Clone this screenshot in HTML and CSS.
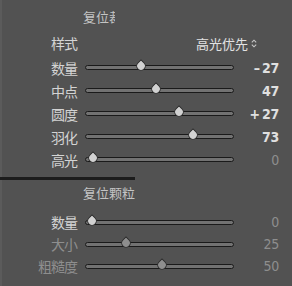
FILE: index.html
```html
<!DOCTYPE html>
<html lang="zh">
<head>
<meta charset="utf-8">
<link rel="stylesheet" href="styles.css">
</head>
<body>
<div class="panel">
  <div class="head"><span class="clip">复位裁剪后暗角</span></div>
  <div class="style-row">
    <span class="label">样式</span>
    <span class="select">高光优先<svg class="updown" width="6" height="9" viewBox="0 0 6 9"><path d="M0.8 3.4 L3 1.2 L5.2 3.4 M0.8 5.6 L3 7.8 L5.2 5.6" fill="none" stroke="#c8c8c8" stroke-width="1.1"/></svg></span>
  </div>
  <div class="rows">
    <div class="row"><span class="label">数量</span><div class="track"><span class="thumb" style="left:55px"></span></div><span class="value">–&#8201;27</span></div>
    <div class="row"><span class="label">中点</span><div class="track"><span class="thumb" style="left:70px"></span></div><span class="value">47</span></div>
    <div class="row"><span class="label">圆度</span><div class="track"><span class="thumb" style="left:93px"></span></div><span class="value">+&#8201;27</span></div>
    <div class="row"><span class="label">羽化</span><div class="track"><span class="thumb" style="left:107px"></span></div><span class="value">73</span></div>
    <div class="row"><span class="label">高光</span><div class="track"><span class="thumb" style="left:7px"></span></div><span class="value dim">0</span></div>
  </div>
  <div class="divider"></div>
  <div class="head head2">复位颗粒</div>
  <div class="rows rows2">
    <div class="row"><span class="label">数量</span><div class="track"><span class="thumb" style="left:6px"></span></div><span class="value dim">0</span></div>
    <div class="row"><span class="label dim">大小</span><div class="track"><span class="thumb dimthumb" style="left:40px"></span></div><span class="value dim">25</span></div>
    <div class="row"><span class="label dim">粗糙度</span><div class="track"><span class="thumb dimthumb" style="left:76px"></span></div><span class="value dim">50</span></div>
  </div>
</div>
</body>
</html>
```

FILE: styles.css
```css
html, body {
  margin: 0;
  padding: 0;
  background: #525252;
}
body {
  width: 292px;
  height: 286px;
  overflow: hidden;
  font-family: "Noto Sans CJK SC", "Liberation Sans", sans-serif;
  color: #d4d4d4;
}
.panel {
  width: 292px;
  height: 286px;
  box-sizing: border-box;
  padding-top: 7px;
  border-left: 2px solid #5b5b5b;
  display: flex;
  flex-direction: column;
}
.head {
  height: 20px;
  line-height: 20px;
  font-size: 13px;
  color: #c4c4c4;
  padding-left: 81px;
}
.clip {
  display: inline-block;
  width: 32px;
  overflow: hidden;
  white-space: nowrap;
  vertical-align: top;
}
.style-row {
  margin-top: 6px;
  height: 20px;
  display: flex;
  align-items: center;
  font-size: 13px;
}
.label {
  width: 75px;
  flex: none;
  text-align: right;
  font-size: 14px;
  letter-spacing: -1px;
  line-height: 20px;
  white-space: nowrap;
}
.select {
  margin-left: 119px;
  display: flex;
  align-items: center;
  gap: 3px;
  color: #e2e2e2;
}
.updown { display: block; }
.rows {
  margin-top: 3px;
  display: flex;
  flex-direction: column;
}
.row {
  height: 23px;
  display: flex;
  align-items: center;
}
.rows2 { margin-top: 8px; }
.rows2 .row { height: 22px; }
.track {
  position: relative;
  margin-left: 8px;
  width: 149px;
  height: 5px;
  box-sizing: border-box;
  background: #727272;
  border: 1px solid #1a1a1a;
  border-radius: 3px;
  flex: none;
}
.thumb {
  position: absolute;
  top: -5px;
  width: 10px;
  height: 10px;
  margin-left: -5px;
  background: #d2d2d2;
  border: 1px solid #2a2a2a;
  box-sizing: border-box;
  border-radius: 50% 0 50% 50%;
  transform: rotate(-45deg) scale(0.95);
}
.dimthumb { background: #8e8e8e; }
.value {
  width: 45px;
  flex: none;
  text-align: right;
  font-family: "DejaVu Sans", sans-serif;
  font-stretch: condensed;
  font-weight: bold;
  font-size: 14px;
  color: #e0e0e0;
  letter-spacing: -0.3px;
}
.dim { color: #8e8e8e; }
.value.dim { font-weight: normal; }
.divider {
  margin-top: 6px;
  width: 135px;
  height: 3px;
  margin-left: -2px;
  background: #1c1c1c;
}
.head2 {
  margin-top: 3px;
}
```
